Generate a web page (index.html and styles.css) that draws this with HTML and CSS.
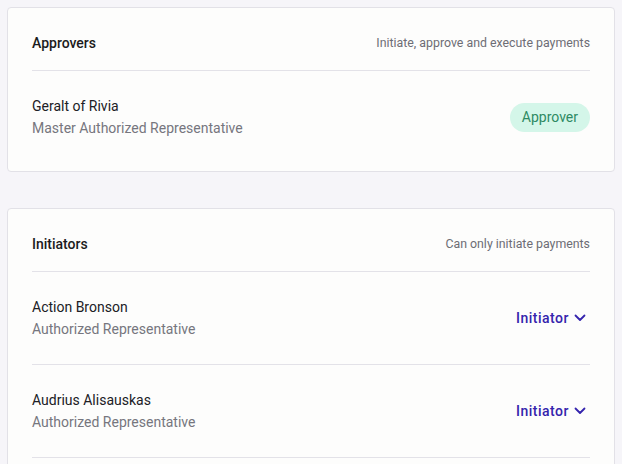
FILE: index.html
```html
<!DOCTYPE html>
<html>
<head>
<meta charset="utf-8">
<link rel="stylesheet" href="styles.css">
</head>
<body>
<div class="page">
  <section class="card card-first">
    <div class="card-head">
      <h2 class="card-title">Approvers</h2>
      <span class="card-note">Initiate, approve and execute payments</span>
    </div>
    <div class="row row-last">
      <div class="person">
        <div class="person-name">Geralt of Rivia</div>
        <div class="person-role">Master Authorized Representative</div>
      </div>
      <span class="badge">Approver</span>
    </div>
  </section>

  <section class="card card-open">
    <div class="card-head">
      <h2 class="card-title">Initiators</h2>
      <span class="card-note">Can only initiate payments</span>
    </div>
    <div class="row">
      <div class="person">
        <div class="person-name">Action Bronson</div>
        <div class="person-role">Authorized Representative</div>
      </div>
      <button class="role-select">Initiator
        <svg class="chev" width="12" height="8" viewBox="0 0 12 8"><path d="M1.5 1.5 L6 6 L10.5 1.5" fill="none" stroke="currentColor" stroke-width="1.8" stroke-linecap="round" stroke-linejoin="round"/></svg>
      </button>
    </div>
    <div class="row">
      <div class="person">
        <div class="person-name">Audrius Alisauskas</div>
        <div class="person-role">Authorized Representative</div>
      </div>
      <button class="role-select">Initiator
        <svg class="chev" width="12" height="8" viewBox="0 0 12 8"><path d="M1.5 1.5 L6 6 L10.5 1.5" fill="none" stroke="currentColor" stroke-width="1.8" stroke-linecap="round" stroke-linejoin="round"/></svg>
      </button>
    </div>
  </section>
</div>
</body>
</html>
```

FILE: styles.css
```css
html, body {
  margin: 0;
  padding: 0;
  background: #f6f5f9;
  height: 100%;
  overflow: hidden;
}
body {
  font-family: Roboto, "Liberation Sans", sans-serif;
  color: #1f1f24;
}
.page {
  padding: 7px 7px 0 7px;
  display: flex;
  flex-direction: column;
  gap: 36px;
}
.card {
  background: #fdfdfc;
  border: 1px solid #e2e1e7;
  border-radius: 4px;
  padding: 0 24px;
}
.card-first {
  padding-bottom: 8px;
}
.card-open {
  padding-bottom: 40px;
}
.card-head {
  display: flex;
  justify-content: space-between;
  align-items: center;
  padding: 27px 0 19px;
  border-bottom: 1px solid #e3e2e8;
  line-height: 16px;
}
.card-title {
  margin: 0;
  font-size: 14px;
  font-weight: 500;
  color: #1b1b20;
}
.card-note {
  font-size: 12.35px;
  color: #6d6d75;
}
.row {
  display: flex;
  justify-content: space-between;
  align-items: center;
  padding: 24px 0;
  border-bottom: 1px solid #e3e2e8;
}
.row-last {
  border-bottom: none;
}
.person {
  line-height: 22px;
}
.person-name {
  font-size: 14px;
  color: #202025;
}
.person-role {
  font-size: 14px;
  color: #76767e;
}
.badge {
  display: inline-block;
  height: 29px;
  line-height: 29px;
  padding: 0 12px;
  border-radius: 15px;
  background: #d4f6e9;
  color: #2e8a63;
  font-size: 14px;
}
.role-select {
  display: flex;
  align-items: center;
  gap: 5px;
  border: none;
  background: none;
  padding: 0 4px 0 0;
  font-family: inherit;
  font-size: 14px;
  font-weight: 500;
  letter-spacing: 0.5px;
  color: #3424ad;
  cursor: pointer;
}
.chev {
  display: block;
}
```
